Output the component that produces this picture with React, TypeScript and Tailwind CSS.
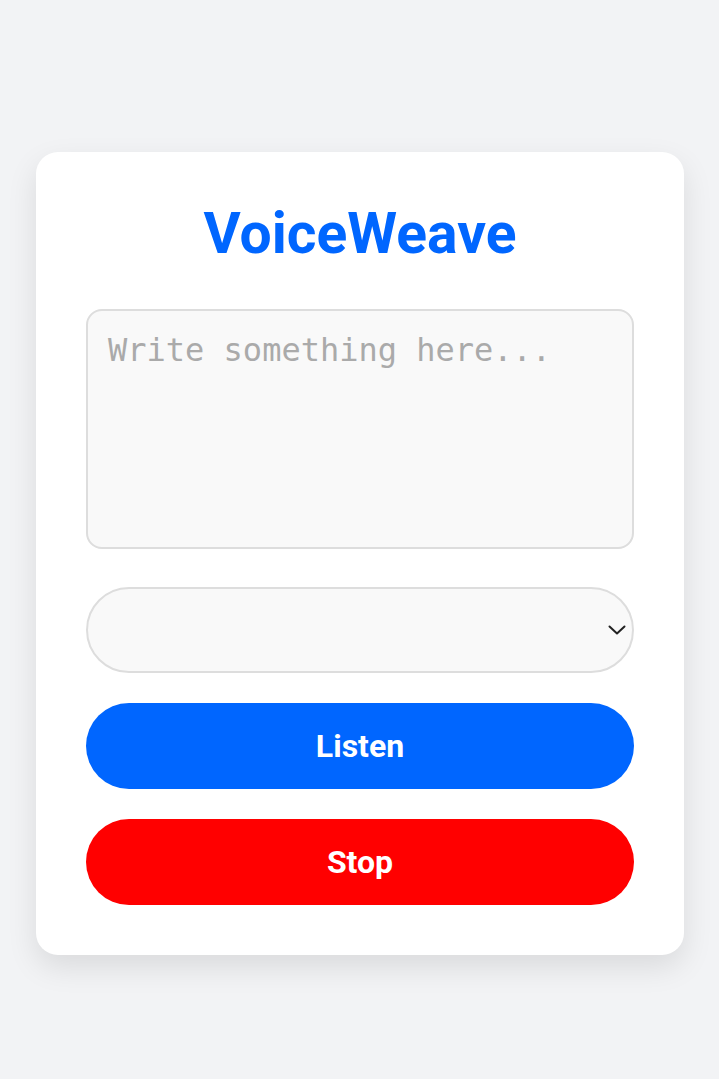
import { useState } from 'react';

const ChevronDown = () => (
	<svg width="18" height="10" viewBox="0 0 18 10" fill="none" className="pointer-events-none absolute right-[8px] top-1/2 -translate-y-1/2">
		<path d="M1.5 1.5 L9 8.5 L16.5 1.5" stroke="#222" strokeWidth="2" strokeLinecap="round" strokeLinejoin="round" />
	</svg>
);

const App = () => {
	const [text, setText] = useState('');
	const [voice, setVoice] = useState('');

	return (
		<div className="min-h-[1079px] w-full bg-[#f2f3f5] px-[36px] pt-[152px] font-['Roboto',sans-serif]">
			<div className="flex w-[648px] flex-col rounded-[22px] bg-white px-[50px] pb-[50px] pt-[46px] shadow-[0_12px_30px_rgba(0,0,0,0.1)]">
				<h1 className="text-center text-[57px] font-bold leading-[72px] text-[#0066ff]">VoiceWeave</h1>

				<textarea
					value={text}
					onChange={(e) => setText(e.target.value)}
					placeholder="Write something here..."
					className="mt-[39px] h-[240px] w-full resize-none rounded-[16px] border-2 border-[#dddddd] bg-[#f9f9f9] px-[20px] py-[17px] font-['DejaVu_Sans_Mono',monospace] text-[32px] leading-[44px] text-[#333] outline-none placeholder:text-[#aaaaaa]"
				/>

				<div className="relative mt-[38px]">
					<select
						value={voice}
						onChange={(e) => setVoice(e.target.value)}
						className="h-[86px] w-full appearance-none rounded-full border-2 border-[#dddddd] bg-[#f9f9f9] px-[24px] text-[28px] text-[#333] outline-none"
					>
						<option value=""></option>
					</select>
					<ChevronDown />
				</div>

				<button className="mt-[30px] h-[86px] w-full rounded-full bg-[#0066ff] text-[32px] font-bold text-white">Listen</button>
				<button className="mt-[30px] h-[86px] w-full rounded-full bg-[#ff0000] text-[32px] font-bold text-white">Stop</button>
			</div>
		</div>
	);
};

export default App;
